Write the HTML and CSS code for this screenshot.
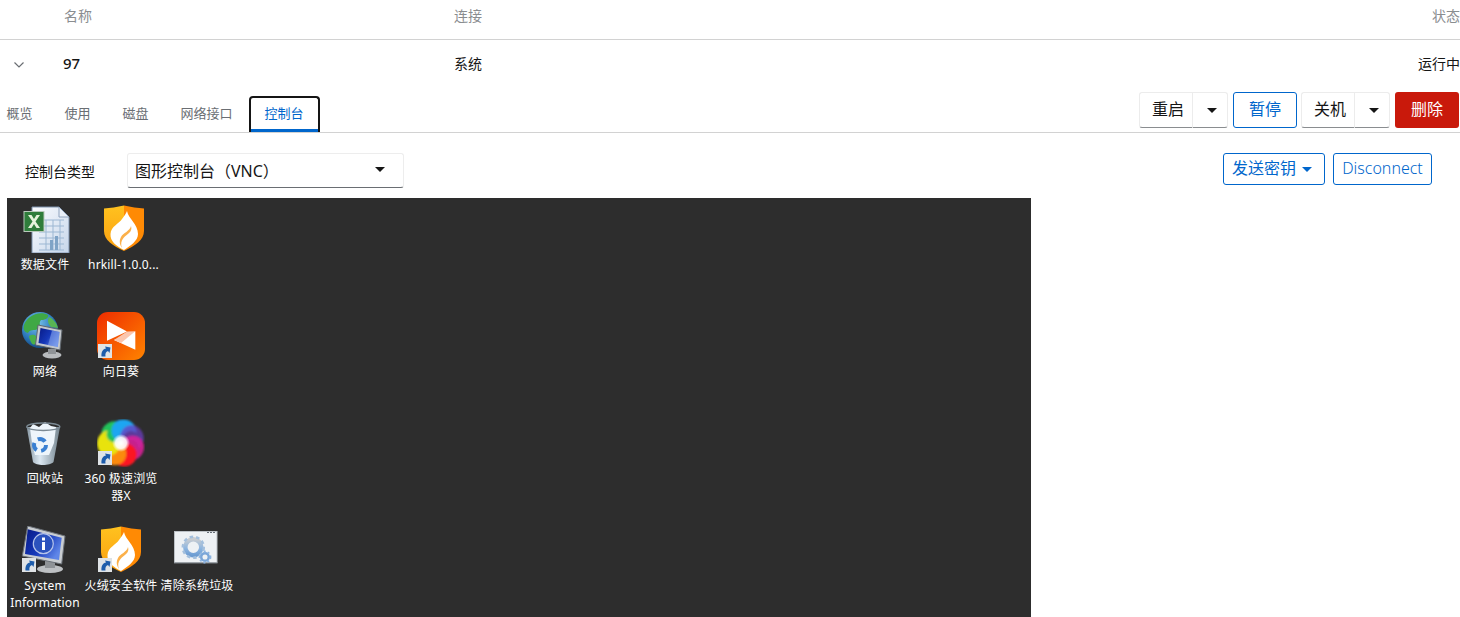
FILE: index.html
```html
<!DOCTYPE html>
<html lang="zh-CN">
<head>
    <meta charset="UTF-8">
    <title>虚拟机</title>
    <link rel="stylesheet" href="styles.css">
</head>
<body>
    <svg class="defs" width="0" height="0" xmlns="http://www.w3.org/2000/svg">
        <defs>
            <linearGradient id="shieldLeft" x1="0" y1="0" x2="0" y2="1">
                <stop offset="0%" stop-color="#ffc21f"></stop>
                <stop offset="100%" stop-color="#fb9f10"></stop>
            </linearGradient>
            <linearGradient id="sunBg" x1="0" y1="0" x2="1" y2="1">
                <stop offset="0%" stop-color="#ee2c00"></stop>
                <stop offset="100%" stop-color="#ff8400"></stop>
            </linearGradient>
            <radialGradient id="globeBg" cx="0.4" cy="0.3" r="0.8">
                <stop offset="0%" stop-color="#7cc8f0"></stop>
                <stop offset="60%" stop-color="#2a76b8"></stop>
                <stop offset="100%" stop-color="#0d3a70"></stop>
            </radialGradient>
            <linearGradient id="screenBg" x1="0" y1="0" x2="1" y2="0.6">
                <stop offset="0%" stop-color="#071a86"></stop>
                <stop offset="55%" stop-color="#1537b8"></stop>
                <stop offset="100%" stop-color="#5f86e8"></stop>
            </linearGradient>
            <linearGradient id="binBg" x1="0" y1="0" x2="1" y2="0">
                <stop offset="0%" stop-color="#8a9aa6"></stop>
                <stop offset="40%" stop-color="#dce8f2"></stop>
                <stop offset="100%" stop-color="#75858f"></stop>
            </linearGradient>
            <linearGradient id="docBg" x1="0" y1="0" x2="1" y2="1">
                <stop offset="0%" stop-color="#fbfcff"></stop>
                <stop offset="100%" stop-color="#c6d6ea"></stop>
            </linearGradient>
            <linearGradient id="gearBg" x1="0" y1="0" x2="0" y2="1">
                <stop offset="0%" stop-color="#c9ccd0"></stop>
                <stop offset="55%" stop-color="#8fb6e0"></stop>
                <stop offset="100%" stop-color="#6c9cd2"></stop>
            </linearGradient>
            <radialGradient id="flowerCore">
                <stop offset="0%" stop-color="#fff"></stop>
                <stop offset="60%" stop-color="#fff" stop-opacity="0.9"></stop>
                <stop offset="100%" stop-color="#fff" stop-opacity="0"></stop>
            </radialGradient>
            <filter id="soft" x="-20%" y="-20%" width="140%" height="140%">
                <feGaussianBlur stdDeviation="0.9"></feGaussianBlur>
            </filter>
            <filter id="blur1" x="-20%" y="-20%" width="140%" height="140%">
                <feGaussianBlur stdDeviation="0.4"></feGaussianBlur>
            </filter>
            <symbol id="shield" viewBox="0 0 48 48">
                <path d="M24 0.500C17 2 10 3 4 3.500V26C4 35 13 41 24 46Z" fill="url(#shieldLeft)"></path>
                <path d="M24 0.500C31 2 38 3 44 3.500V26C44 35 35 41 24 46Z" fill="#ff8a04"></path>
                <path d="M27 6C28 13 38 19 38 29C38 36 30 41 24 45C16 41 10 36 10.500 29C11 21 19 19 22 14C24 11 26 9 27 6Z" fill="#fff"></path>
                <path d="M31 21C33 27 27 29 23.500 33C21 36 20.500 39 22 43C19.500 39 19 36 21 32C23 28 30 26 31 21Z" fill="#fbb04a"></path>
            </symbol>
            <symbol id="shortcut" viewBox="0 0 14 14">
                <rect width="14" height="14" fill="#dfe3e6"></rect>
                <path d="M3.500 12.500C3 8 5 5 8 4.500L7 2.500L12.500 3.500L11.500 9L10 7C8 7.500 7 9.500 7.500 12.500Z" fill="#1d5cab"></path>
            </symbol>
        </defs>
    </svg>

    <div class="list-head">
        <span class="col-name">名称</span>
        <span class="col-conn">连接</span>
        <span class="col-state">状态</span>
    </div>
    <div class="list-row">
        <svg class="row-toggle" width="12" height="8" viewBox="0 0 12 8" xmlns="http://www.w3.org/2000/svg">
            <path d="M1.500 1.500L6 6L10.500 1.500" fill="none" stroke="#6a6e73" stroke-width="1.200"></path>
        </svg>
        <span class="col-name vm-name">97</span>
        <span class="col-conn">系统</span>
        <span class="col-state">运行中</span>
    </div>

    <div class="tab-bar">
        <ul class="tabs">
            <li class="tab">概览</li>
            <li class="tab">使用</li>
            <li class="tab">磁盘</li>
            <li class="tab">网络接口</li>
            <li class="tab tab-current">控制台</li>
        </ul>
        <div class="actions">
            <div class="split">
                <button class="btn btn-plain btn-main">重启</button>
                <button class="btn btn-plain btn-caret"><i class="caret"></i></button>
            </div>
            <button class="btn btn-blue btn-wide">暂停</button>
            <div class="split split-off">
                <button class="btn btn-plain btn-main">关机</button>
                <button class="btn btn-plain btn-caret"><i class="caret"></i></button>
            </div>
            <button class="btn btn-red btn-wide">删除</button>
        </div>
    </div>

    <div class="console-bar">
        <label class="console-label">控制台类型</label>
        <div class="select">
            <span>图形控制台（VNC）</span>
            <i class="caret"></i>
        </div>
        <div class="console-actions">
            <button class="btn btn-blue btn-send">发送密钥<i class="caret caret-blue"></i></button>
            <button class="btn btn-blue btn-disc">Disconnect</button>
        </div>
    </div>

    <div class="desktop">
        <!-- row 1 -->
        <div class="icon">
            <div class="pic">
                <svg class="doc-icon" width="48" height="48" viewBox="0 0 48 48" xmlns="http://www.w3.org/2000/svg">
                    <path d="M10 2H37L47 12V48H10Z" fill="url(#docBg)" stroke="#7f93ae"></path>
                    <path d="M37 2V12H47Z" fill="#e9eff8" stroke="#8fa3bd"></path>
                    <path d="M17 15H42M17 21H42M17 27H42M17 33H42M17 39H42M17 45H42M24 15V45M31 15V45M38 15V45" stroke="#9cb7d3" fill="none"></path>
                    <rect x="28" y="35" width="3" height="10" fill="#7fa3c6"></rect>
                    <rect x="33" y="31" width="3" height="14" fill="#7fa3c6"></rect>
                    <rect x="2" y="6.500" width="20" height="20" fill="#2f7d3b" stroke="#b9c9bb"></rect>
                    <path d="M6 10L10.500 16.500L6 23H9.500L12 19L14.500 23H18L13.500 16.500L18 10H14.500L12 14L9.500 10Z" fill="#e6f3dc"></path>
                </svg>
            </div>
            <span class="label">数据文件</span>
        </div>
        <div class="icon">
            <div class="pic"><svg class="shield-top" width="48" height="48"><use href="#shield"></use></svg></div>
            <span class="label label-shift">hrkill-1.0.0...</span>
        </div>
        <div class="icon icon-empty"></div>

        <!-- row 2 -->
        <div class="icon">
            <div class="pic">
                <svg width="48" height="48" viewBox="0 0 48 48" xmlns="http://www.w3.org/2000/svg">
                    <g filter="url(#blur1)">
                        <circle cx="19" cy="18" r="18" fill="url(#globeBg)"></circle>
                        <path d="M9 5C14 1 22 0 27 3C28 6 24 8 20 8C17 11 21 14 17 17C13 19 9 17 7 21C3 20 2 17 3 13C4 10 6 7 9 5Z" fill="#3fa844"></path>
                        <path d="M8 24C13 21 17 24 16 29C15 33 12 34 10 30C9 28 8 26 8 24Z" fill="#4bb04a"></path>
                        <path d="M28 5C32 7 36 11 37 16L30 15C27 12 26 8 28 5Z" fill="#58b552"></path>
                    </g>
                    <path d="M17 13L41 18L39 38L14.500 33Z" fill="#c3c8cd" stroke="#5e656c"></path>
                    <path d="M19.500 16L38.500 20L36.800 35L17.500 31Z" fill="url(#screenBg)"></path>
                    <path d="M31 18.500L38.500 20L36.800 35L27 33Z" fill="#8cabee" opacity="0.55"></path>
                    <ellipse cx="31" cy="43" rx="9.500" ry="3.500" fill="#b8bbbe"></ellipse>
                    <rect x="27" y="37" width="8" height="5" fill="#8f9397"></rect>
                </svg>
            </div>
            <span class="label">网络</span>
        </div>
        <div class="icon">
            <div class="pic">
                <svg width="48" height="48" viewBox="0 0 48 48" xmlns="http://www.w3.org/2000/svg">
                    <rect width="48" height="48" rx="11" fill="url(#sunBg)"></rect>
                    <path d="M10 8.700L30 19.500L10 28.700Z" fill="#fff"></path>
                    <path d="M38.300 19.300V37.700L17 28Z" fill="#fff"></path>
                    <path d="M17 28L30 19.500L38.300 19.300L24 31Z" fill="#fbc6ae"></path>
                </svg>
                <svg class="shortcut" width="14" height="14"><use href="#shortcut"></use></svg>
            </div>
            <span class="label">向日葵</span>
        </div>
        <div class="icon icon-empty"></div>

        <!-- row 3 -->
        <div class="icon">
            <div class="pic">
                <svg width="48" height="48" viewBox="0 0 48 48" xmlns="http://www.w3.org/2000/svg">
                    <path d="M5.700 8L12 43C15 47 29 47 32.500 43L39 8Z" fill="url(#binBg)"></path>
                    <path d="M9 9L12 5L18 8L24 3L30 7L35 8L33 24L28 36L14 36L11 24Z" fill="#eef5fb"></path>
                    <ellipse cx="22.300" cy="7.700" rx="16.500" ry="3.800" fill="none" stroke="#7b8993" stroke-width="1.500"></ellipse>
                    <circle cx="19" cy="26" r="6" fill="none" stroke="#3a80d2" stroke-width="4" stroke-dasharray="8 4.600"></circle>
                </svg>
            </div>
            <span class="label">回收站</span>
        </div>
        <div class="icon">
            <div class="pic">
                <svg width="48" height="48" viewBox="0 0 48 48" xmlns="http://www.w3.org/2000/svg">
                    <g filter="url(#soft)">
                        <path transform="rotate(300 24 24)" d="M24 24C14 18 14 4 26 1C36 0 43 8 41 17C36 11 28 13 24 24Z" fill="#23c25a"></path>
                        <path transform="rotate(350 24 24)" d="M24 24C14 18 14 4 26 1C36 0 43 8 41 17C36 11 28 13 24 24Z" fill="#1ca6f2"></path>
                        <path transform="rotate(40 24 24)" d="M24 24C14 18 14 4 26 1C36 0 43 8 41 17C36 11 28 13 24 24Z" fill="#6b3fc0" opacity="0.75"></path>
                        <path transform="rotate(90 24 24)" d="M24 24C14 18 14 4 26 1C36 0 43 8 41 17C36 11 28 13 24 24Z" fill="#e01f9c" opacity="0.85"></path>
                        <path transform="rotate(140 24 24)" d="M24 24C14 18 14 4 26 1C36 0 43 8 41 17C36 11 28 13 24 24Z" fill="#fb1420"></path>
                        <path transform="rotate(190 24 24)" d="M24 24C14 18 14 4 26 1C36 0 43 8 41 17C36 11 28 13 24 24Z" fill="#fb8a0c"></path>
                        <path transform="rotate(245 24 24)" d="M24 24C14 18 14 4 26 1C36 0 43 8 41 17C36 11 28 13 24 24Z" fill="#e8e30c"></path>
                    </g>
                    <circle cx="24" cy="24" r="9" fill="url(#flowerCore)"></circle>
                </svg>
                <svg class="shortcut" width="14" height="14"><use href="#shortcut"></use></svg>
            </div>
            <span class="label">360 极速浏览器X</span>
        </div>
        <div class="icon icon-empty"></div>

        <!-- row 4 -->
        <div class="icon">
            <div class="pic">
                <svg width="48" height="48" viewBox="0 0 48 48" xmlns="http://www.w3.org/2000/svg">
                    <ellipse cx="29" cy="43" rx="13" ry="4" fill="#bdc0c3"></ellipse>
                    <rect x="24" y="35" width="10" height="7" fill="#8f9397"></rect>
                    <path d="M6.700 0L44 10L40.700 38L1.300 30Z" fill="#c9cdd1" stroke="#6b7178"></path>
                    <path d="M6.700 3.300L40.700 11.700L38 34L4 28Z" fill="url(#screenBg)"></path>
                    <circle cx="22.300" cy="17.700" r="10" fill="#2b52bd" stroke="#b6c4ea" stroke-width="1.200"></circle>
                    <rect x="21" y="16" width="3" height="8" fill="#fff"></rect>
                    <rect x="21" y="11.500" width="3" height="3" fill="#fff"></rect>
                </svg>
                <svg class="shortcut" width="14" height="14"><use href="#shortcut"></use></svg>
            </div>
            <span class="label">System Information</span>
        </div>
        <div class="icon">
            <div class="pic">
                <svg width="48" height="48"><use href="#shield"></use></svg>
                <svg class="shortcut" width="14" height="14"><use href="#shortcut"></use></svg>
            </div>
            <span class="label">火绒安全软件</span>
        </div>
        <div class="icon">
            <div class="pic">
                <svg width="48" height="48" viewBox="0 0 48 48" xmlns="http://www.w3.org/2000/svg">
                    <rect x="1.500" y="5.500" width="42.500" height="31" fill="#eef1f4" stroke="#bcc1c6"></rect>
                    <path d="M1 37H44.500" stroke="#7d8288" fill="none"></path>
                    <path d="M34 6.500H43" stroke="#666d76" stroke-dasharray="2 1" fill="none"></path>
                    <circle cx="20.300" cy="21.300" r="8" fill="none" stroke="url(#gearBg)" stroke-width="4.500"></circle>
                    <circle cx="20.300" cy="21.300" r="10.500" fill="none" stroke="#a3bfdd" stroke-width="2.500" stroke-dasharray="3.500 3"></circle>
                    <circle cx="32" cy="31" r="3.800" fill="none" stroke="#7ba6d8" stroke-width="2.500"></circle>
                    <circle cx="32" cy="31" r="5.500" fill="none" stroke="#8db4e0" stroke-width="1.800" stroke-dasharray="2 2"></circle>
                </svg>
            </div>
            <span class="label">清除系统垃圾</span>
        </div>
    </div>
</body>
</html>
```

FILE: styles.css
```css
*{
    margin: 0;
    padding: 0;
    box-sizing: border-box;
}
body{
    background-color: #fff;
    color: #151515;
    font-family: "Noto Sans", "Noto Sans CJK SC", sans-serif;
    font-size: 14px;
    overflow: hidden;
}
.defs{
    display: block;
    height: 0;
}
.list-head,
.list-row{
    display: flex;
    align-items: center;
    padding-left: 64px;
    position: relative;
}
.list-head{
    height: 40px;
    padding-bottom: 9px;
    color: #8a8d90;
    border-bottom: 1px solid #d2d2d2;
}
.list-row{
    height: 48px;
    padding-bottom: 2px;
}
.row-toggle{
    position: absolute;
    left: 13px;
    top: 21px;
}
.col-name{
    width: 390px;
}
.vm-name{
    font-size: 15px;
    font-weight: 500;
    text-indent: -1px;
}
.col-state{
    margin-left: auto;
}
.tab-bar{
    display: flex;
    justify-content: space-between;
    height: 45px;
    border-bottom: 1px solid #d2d2d2;
}
.tabs{
    display: flex;
    list-style: none;
    margin-top: 8px;
    font-size: 13px;
}
.tab{
    height: 36px;
    line-height: 34px;
    padding: 0 16px;
    color: #6a6e73;
}
.tab:first-child{
    padding-left: 6.500px;
}
.tab-current{
    color: #06c;
    border: 2px solid #151515;
    border-bottom: 0;
    border-radius: 4px 4px 0 0;
    padding: 0 14px;
    line-height: 30px;
    box-shadow: inset 0 -3px 0 #06c;
    margin-bottom: -1px;
}
.actions{
    display: flex;
    gap: 5px;
    padding-top: 4px;
    padding-right: 1px;
}
.split{
    display: flex;
}
.split-off{
    margin-left: -1px;
}
.btn{
    height: 36px;
    background: #fff;
    font-family: inherit;
    font-size: 16px;
    line-height: 20px;
    padding-bottom: 2px;
    border: 0;
    border-radius: 3px;
}
.btn-plain{
    color: #151515;
    border: 1px solid #ececec;
    border-bottom-color: #8a8d90;
}
.btn-main{
    width: 53px;
    padding-left: 4px;
    border-radius: 3px 0 0 3px;
    border-right: 0;
}
.btn-caret{
    width: 36px;
    padding: 0 0 0 4px;
    border-radius: 0 3px 3px 0;
    display: flex;
    align-items: center;
    justify-content: center;
}
.btn-blue{
    color: #06c;
    border: 1px solid #06c;
}
.btn-red{
    color: #fff;
    background: #c9190b;
}
.btn-wide{
    width: 64px;
}
.caret{
    display: inline-block;
    width: 0;
    height: 0;
    border-left: 5px solid transparent;
    border-right: 5px solid transparent;
    border-top: 5px solid #151515;
}
.caret-blue{
    border-top-color: #06c;
    margin-left: 6px;
    vertical-align: 2px;
}
.console-bar{
    display: flex;
    height: 65px;
    padding: 20px 28px 0 25px;
}
.console-label{
    width: 102px;
    font-size: 14px;
    line-height: 38px;
}
.select{
    display: flex;
    align-items: center;
    justify-content: space-between;
    width: 277px;
    height: 35px;
    padding: 0 18px 2px 7px;
    font-size: 16px;
    background: #fff;
    border: 1px solid #ededed;
    border-bottom-color: #6a6e73;
    border-radius: 3px;
}
.console-actions{
    display: flex;
    gap: 8px;
    margin-left: auto;
}
.btn-send,
.btn-disc{
    height: 32px;
}
.btn-send{
    width: 102px;
    padding-right: 4px;
}
.btn-disc{
    width: 99px;
    font-size: 16px;
    font-weight: 300;
}
.desktop{
    display: grid;
    grid-template-columns: repeat(3, 76px);
    grid-auto-rows: 107px;
    width: 1024px;
    height: 419px;
    margin-left: 7px;
    padding-top: 7px;
    background: #2d2d2d;
    overflow: hidden;
}
.icon{
    display: flex;
    flex-direction: column;
    align-items: center;
    color: #fff;
    font-size: 12px;
    line-height: 17px;
    letter-spacing: 0.150px;
    text-align: center;
}
.pic{
    position: relative;
    width: 48px;
    height: 48px;
    margin-bottom: 3px;
}
.pic svg{
    display: block;
}
.pic .shield-top{
    margin-left: 3px;
}
.pic .doc-icon{
    margin-left: 1px;
}
.pic .shortcut{
    position: absolute;
    left: 1px;
    bottom: 2px;
}
.label{
    width: 76px;
}
.label-shift{
    padding-left: 5px;
}
```
